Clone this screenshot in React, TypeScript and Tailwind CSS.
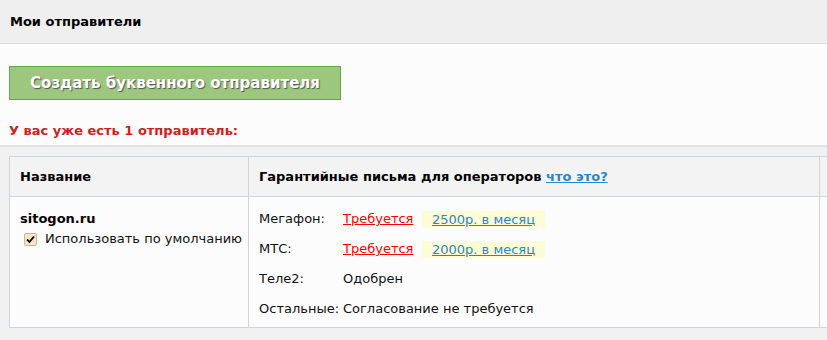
import React from "react";

export default function App() {
  const rows: { label: string; value: React.ReactNode }[] = [
    {
      label: "Мегафон:",
      value: (
        <div className="flex items-center">
          <a className="text-[#ff0000] underline w-[79px]">Требуется</a>
          <span className="bg-[#fcfcd6] h-[17px] flex items-center pl-[10px] pr-[10px] leading-none">
            <a className="text-[#2a86cc] underline">2500р. в месяц</a>
          </span>
        </div>
      ),
    },
    {
      label: "МТС:",
      value: (
        <div className="flex items-center">
          <a className="text-[#ff0000] underline w-[79px]">Требуется</a>
          <span className="bg-[#fcfcd6] h-[17px] flex items-center pl-[10px] pr-[10px] leading-none">
            <a className="text-[#2a86cc] underline">2000р. в месяц</a>
          </span>
        </div>
      ),
    },
    { label: "Теле2:", value: <span>Одобрен</span> },
    { label: "Остальные:", value: <span>Согласование не требуется</span> },
  ];

  return (
    <div className="w-[827px] h-[340px] overflow-hidden bg-[#fcfcfc] text-[13px] text-[#111] font-['DejaVu_Sans',Verdana,sans-serif]">
      <div className="h-[44px] bg-[#efefef] border-b border-[#dcdcdc] flex items-center pl-[10px] font-bold text-black">
        Мои отправители
      </div>
      <div className="pt-[22px] pl-[9px]">
        <button className="w-[332px] h-[34px] bg-[#9dc77f] border border-[#5eab4a] text-white font-bold text-[15px] [text-shadow:1px_1px_1px_#555] flex items-center justify-center">
          Создать буквенного отправителя
        </button>
      </div>
      <div className="pl-[9px] mt-[22px] h-[18px] flex items-center font-bold text-[#cc2222]">
        У вас уже есть 1 отправитель:
      </div>
      <div className="mt-[5px] border-t-2 border-[#e2e2e2] bg-[#f1f1f1] pt-[9px] pl-[9px] h-[200px]">
        <div className="flex w-[900px] border border-[#cfd3da]">
          <div className="w-[239px] border-r border-[#cfd3da] flex flex-col">
            <div className="h-[40px] bg-[#f3f3f3] border-b border-[#cfd3da] flex items-center pl-[10px] font-bold text-black">
              Название
            </div>
            <div className="h-[130px] bg-[#fcfcfc] pl-[10px] pt-[13px]">
              <div className="font-bold text-black leading-[18px]">sitogon.ru</div>
              <div className="flex items-center h-[22px] pl-[4px]">
                <span className="w-[13px] h-[13px] rounded-[2px] bg-[#f2e6c8] border border-[#c8b890] flex items-center justify-center">
                  <svg width="9" height="9" viewBox="0 0 9 9">
                    <path d="M1 4.5 L3.5 7 L8 1.5" stroke="#000" strokeWidth="1.8" fill="none" />
                  </svg>
                </span>
                <span className="ml-[8px]">Использовать по умолчанию</span>
              </div>
            </div>
          </div>
          <div className="w-[571px] border-r border-[#cfd3da] flex flex-col">
            <div className="h-[40px] bg-[#f3f3f3] border-b border-[#cfd3da] flex items-center pl-[10px] font-bold text-black">
              Гарантийные письма для операторов&nbsp;
              <a className="text-[#2a86cc] underline">что это?</a>
            </div>
            <div className="h-[130px] bg-[#fcfcfc] pl-[10px] pt-[7px]">
              {rows.map((r) => (
                <div key={r.label} className="flex items-center h-[30px]">
                  <span className="w-[84px]">{r.label}</span>
                  {r.value}
                </div>
              ))}
            </div>
          </div>
          <div className="flex-1 flex flex-col">
            <div className="h-[40px] bg-[#f3f3f3] border-b border-[#cfd3da]" />
            <div className="h-[130px] bg-[#fcfcfc]" />
          </div>
        </div>
      </div>
    </div>
  );
}
